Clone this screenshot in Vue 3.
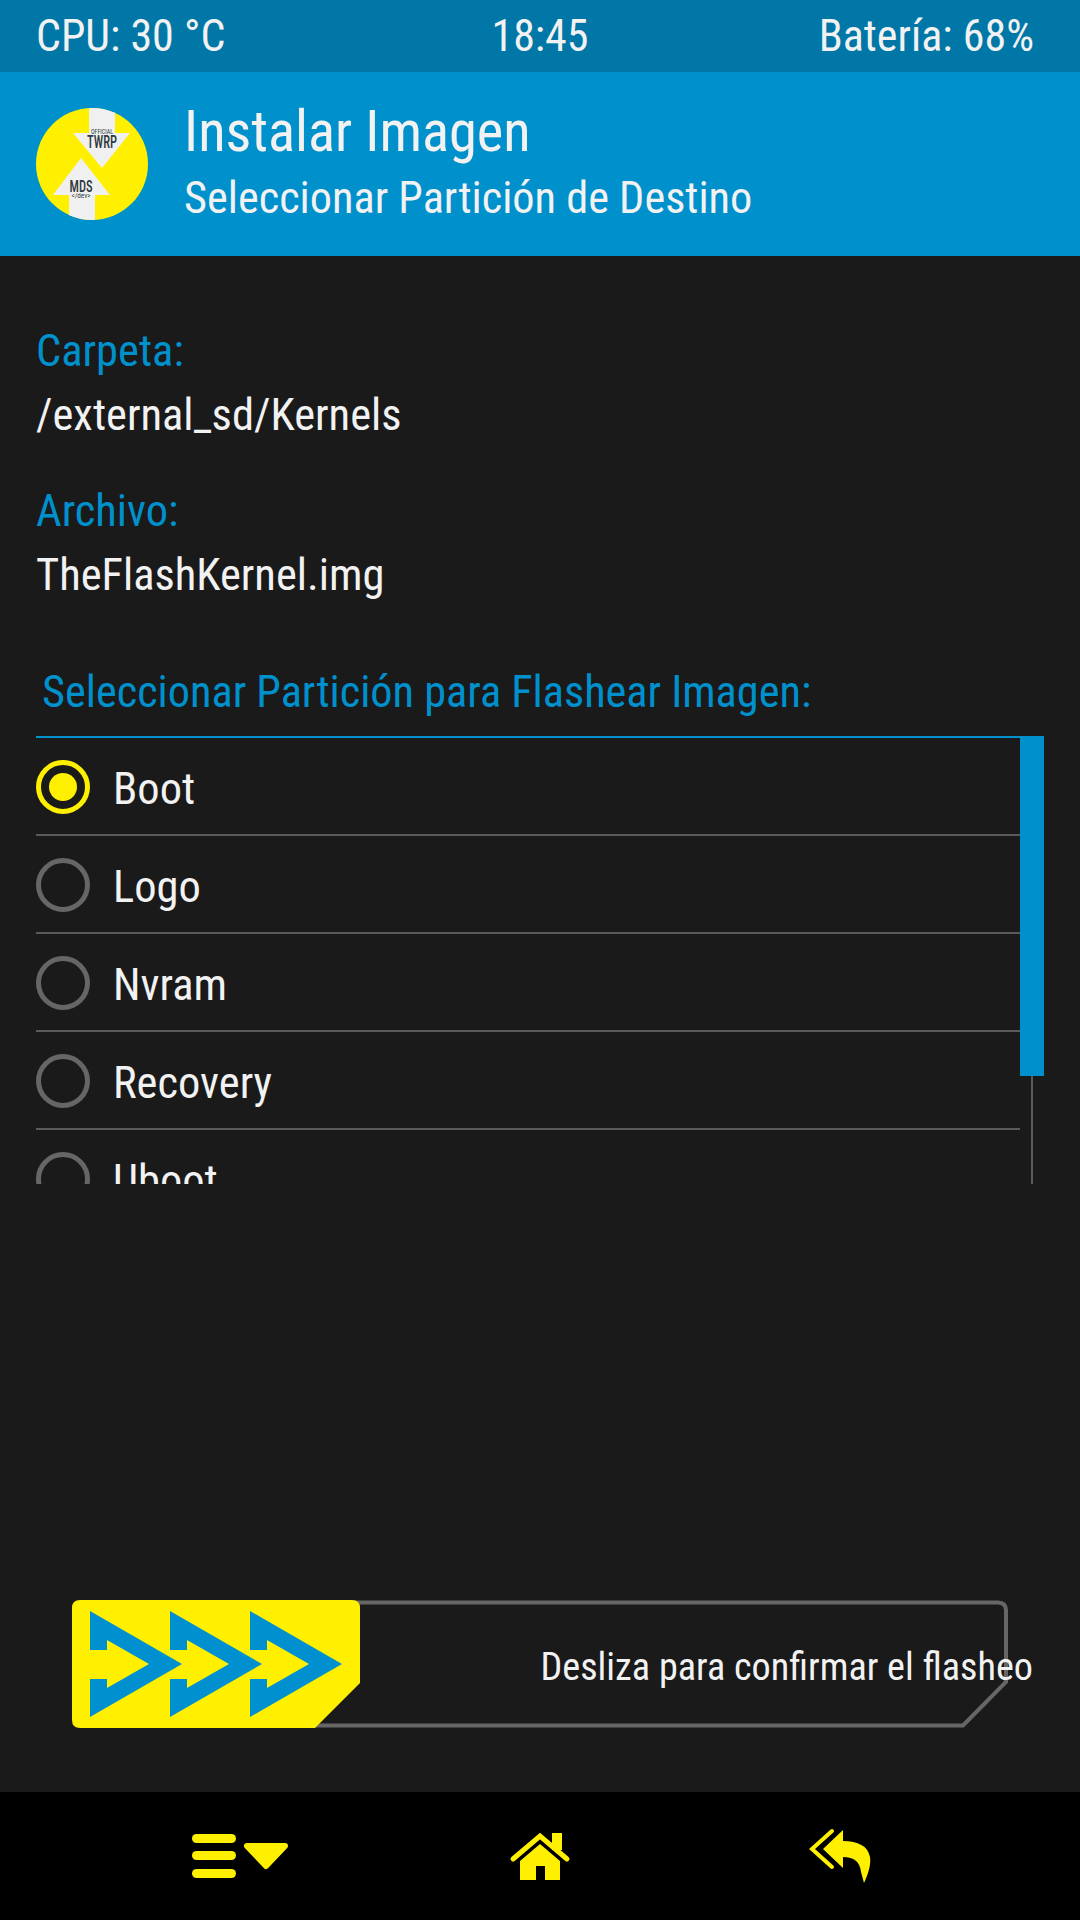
<script setup>
const partitions = [
  { name: 'Boot', selected: true },
  { name: 'Logo', selected: false },
  { name: 'Nvram', selected: false },
  { name: 'Recovery', selected: false },
  { name: 'Uboot', selected: false }
]
const arrowOffsets = [0, 80, 160]
</script>

<template>
  <div class="screen">
    <div class="status-bar">
      <span class="st-left">CPU: 30 °C</span>
      <span class="st-center">18:45</span>
      <span class="st-right">Batería: 68%</span>
    </div>

    <header class="header">
      <svg class="logo" width="112" height="112" viewBox="0 0 112 112">
        <defs>
          <clipPath id="logoClip"><circle cx="56" cy="56" r="56" /></clipPath>
        </defs>
        <g clip-path="url(#logoClip)">
          <rect width="112" height="112" fill="#fff000" />
          <polygon points="53,0 79,0 79,25 94,25 66,60 37,25 53,25" fill="#f0f0f0" />
          <polygon points="45,50 74,87 59,87 59,112 33,112 33,87 17,87" fill="#f0f0f0" />
          <text x="66" y="25.5" class="logo-tiny" text-anchor="middle" textLength="22" lengthAdjust="spacingAndGlyphs">OFFICIAL</text>
          <text x="66" y="39.5" class="logo-twrp" text-anchor="middle" textLength="30" lengthAdjust="spacingAndGlyphs">TWRP</text>
          <text x="45" y="84" class="logo-mds" text-anchor="middle" textLength="23" lengthAdjust="spacingAndGlyphs">MDS</text>
          <text x="45" y="90" class="logo-tiny" text-anchor="middle" textLength="19" lengthAdjust="spacingAndGlyphs">&lt;/dev&gt;</text>
        </g>
      </svg>
      <div class="header-text">
        <h1 class="title">Instalar Imagen</h1>
        <p class="subtitle">Seleccionar Partición de Destino</p>
      </div>
    </header>

    <main class="content">
      <div class="info-label">Carpeta:</div>
      <div class="info-value">/external_sd/Kernels</div>
      <div class="info-label second">Archivo:</div>
      <div class="info-value">TheFlashKernel.img</div>

      <div class="list-title">Seleccionar Partición para Flashear Imagen:</div>

      <div class="list-wrap">
        <div class="rows">
          <div v-for="p in partitions" :key="p.name" class="row">
            <span class="radio" :class="{ on: p.selected }"></span>
            <span class="row-name">{{ p.name }}</span>
          </div>
        </div>
        <div class="scroll-track">
          <div class="scroll-thumb"></div>
        </div>
      </div>
    </main>

    <div class="slider">
      <svg class="slider-outline" width="936" height="128" viewBox="0 0 936 128">
        <path d="M200 2.5 H926 Q934 2.5 934 10.5 V82 L891 125.5 H200" fill="none" stroke="#666" stroke-width="4" />
      </svg>
      <svg class="slider-thumb" width="288" height="128" viewBox="0 0 288 128">
        <path d="M8 0 H280 Q288 0 288 8 V83 L243 128 H8 Q0 128 0 120 V8 Q0 0 8 0 Z" fill="#fff000" />
        <polygon
          v-for="dx in arrowOffsets"
          :key="dx"
          :transform="`translate(${dx} 0)`"
          points="18,11 110,64 18,117 18,79 35,79 35,88 77,64 35,40 35,50 18,50"
          fill="#0090d0"
        />
      </svg>
      <span class="slider-text">Desliza para confirmar el flasheo</span>
    </div>

    <nav class="nav">
      <div class="nav-cell">
        <svg width="96" height="64" viewBox="0 0 96 64" fill="#fff000">
          <rect x="0" y="10" width="44" height="9" rx="4.5" />
          <rect x="0" y="27" width="44" height="9" rx="4.5" />
          <rect x="0" y="45" width="44" height="9" rx="4.5" />
          <polygon points="55,22 93,22 74,42" stroke="#fff000" stroke-width="6" stroke-linejoin="round" />
        </svg>
      </div>
      <div class="nav-cell">
        <svg width="96" height="64" viewBox="0 0 96 64" fill="#fff000">
          <path d="M21 35 L48 12 L75 35" fill="none" stroke="#fff000" stroke-width="5" stroke-linecap="round" />
          <rect x="60" y="9" width="10" height="17" />
          <path d="M48 20 L68 37 V56 H53 V42 H44 V56 H28 V37 Z" />
        </svg>
      </div>
      <div class="nav-cell">
        <svg width="96" height="64" viewBox="0 0 96 64" fill="#fff000">
          <path d="M40 7 L20 25 L40 43" fill="none" stroke="#fff000" stroke-width="4" stroke-linecap="round" />
          <path d="M51 6 L31 25 L51 44 V33 C62 33 68 38 69 48 L72 59 C77 48 79 40 78 33 C76 22 66 17 51 17 Z" />
        </svg>
      </div>
    </nav>
  </div>
</template>

<style>
html, body {
  margin: 0;
  padding: 0;
  background: #1a1a1a;
}
</style>

<style scoped>
.screen {
  width: 1080px;
  height: 1920px;
  display: flex;
  flex-direction: column;
  background: #1a1a1a;
  color: #f2f2f2;
  font-family: Roboto, "Liberation Sans", sans-serif;
  font-stretch: 75%;
  overflow: hidden;
}

.status-bar {
  height: 72px;
  padding: 0 46px 0 36px;
  display: grid;
  grid-template-columns: 1fr 1fr 1fr;
  align-items: center;
  background: #0077a6;
  font-size: 44px;
}
.st-center { text-align: center; padding-left: 10px; }
.st-right { text-align: right; }

.header {
  height: 184px;
  padding: 0 36px;
  display: flex;
  align-items: center;
  gap: 36px;
  background: #0090cc;
}
.logo { flex: none; }
.logo-tiny { font-size: 7px; fill: #2f3a40; }
.logo-twrp { font-size: 17.5px; font-weight: 500; fill: #2f3a40; }
.logo-mds { font-size: 17px; font-weight: 500; fill: #2f3a40; }
.title {
  margin: 0;
  font-size: 56.5px;
  font-weight: 400;
  line-height: 68px;
}
.subtitle {
  margin: 0;
  font-size: 44.3px;
  line-height: 64px;
}

.content {
  flex: 1;
  padding: 63px 0 0 36px;
}
.info-label, .info-value, .list-title, .row-name {
  font-size: 44.5px;
  line-height: 64px;
}
.info-label { color: #0090cc; }
.info-label.second { margin-top: 32px; }
.list-title {
  margin-top: 53px;
  margin-left: 6px;
  color: #0090cc;
  font-size: 44.3px;
}

.list-wrap {
  margin-top: 12px;
  height: 448px;
  display: flex;
  overflow: hidden;
}
.rows {
  width: 984px;
  height: 448px;
  border-top: 2px solid #0090cc;
  box-sizing: border-box;
  overflow: hidden;
}
.row {
  height: 96px;
  display: flex;
  align-items: center;
  gap: 23px;
  border-bottom: 2px solid #5a5a5a;
}
.row-name { margin-top: 5px; }
.radio {
  width: 44px;
  height: 44px;
  margin-top: 2px;
  border: 5px solid #666;
  border-radius: 50%;
  position: relative;
  flex: none;
}
.radio.on { border-color: #fff000; }
.radio.on::after {
  content: "";
  position: absolute;
  inset: 8px;
  border-radius: 50%;
  background: #fff000;
}

.scroll-track {
  width: 24px;
  height: 448px;
  display: flex;
  flex-direction: column;
  align-items: center;
}
.scroll-thumb {
  width: 24px;
  height: 340px;
  background: #0090cc;
  flex: none;
}
.scroll-track::after {
  content: "";
  flex: 1;
  width: 2px;
  background: #5a5a5a;
}

.slider {
  position: relative;
  width: 936px;
  height: 128px;
  margin: 0 0 64px 72px;
}
.slider-outline, .slider-thumb {
  position: absolute;
  left: 0;
  top: 0;
}
.slider-text {
  position: absolute;
  right: -25px;
  top: 0;
  line-height: 134px;
  font-size: 38.2px;
}

.nav {
  height: 128px;
  padding: 0 90px;
  display: grid;
  grid-template-columns: repeat(3, 1fr);
  align-items: center;
  background: #000;
}
.nav-cell {
  display: flex;
  justify-content: center;
}
.nav-cell svg { display: block; }
</style>
